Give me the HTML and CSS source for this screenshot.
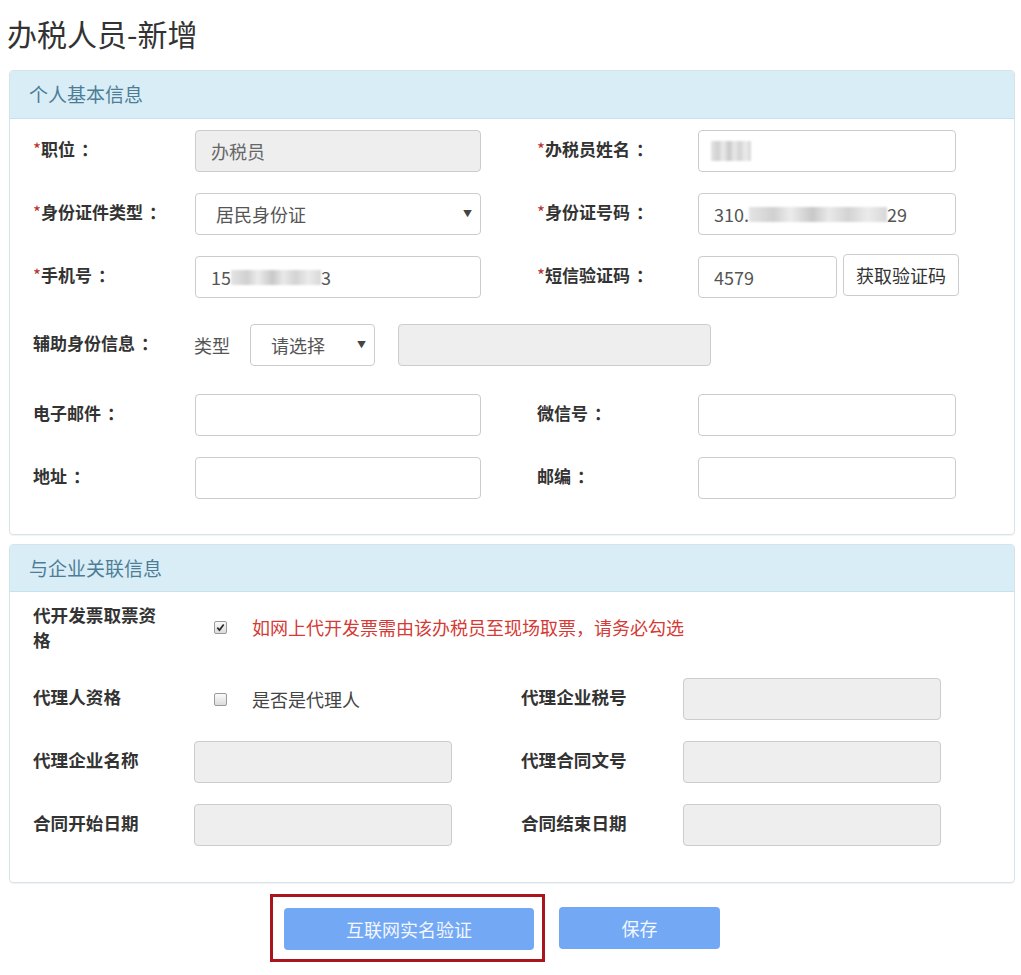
FILE: index.html
```html
<!DOCTYPE html>
<html>
<head>
	<title>办税人员-新增</title>
	<meta name="viewport" content="width=device-width">
	<link rel="stylesheet" href="styles.css">
</head>
<body>
	<div class="page">
		<h1 class="page-title">办税人员-新增</h1>

		<!-- 个人基本信息 -->
		<div class="panel">
			<div class="panel-heading">个人基本信息</div>
			<div class="panel-body basic-body">
				<div class="form-row">
					<label class="field-label"><span class="req">*</span>职位<span class="colon">：</span></label>
					<input class="form-input" type="text" value="办税员" disabled>
					<span></span>
					<label class="field-label"><span class="req">*</span>办税员姓名<span class="colon">：</span></label>
					<div class="form-input fake-input"><span class="mosaic name-mosaic"></span></div>
				</div>

				<div class="form-row">
					<label class="field-label"><span class="req">*</span>身份证件类型<span class="colon">：</span></label>
					<div class="select-wrap">
						<select class="form-select">
							<option selected>居民身份证</option>
						</select>
					</div>
					<span></span>
					<label class="field-label"><span class="req">*</span>身份证号码<span class="colon">：</span></label>
					<div class="form-input fake-input">310.<span class="mosaic id-mosaic"></span>29</div>
				</div>

				<div class="form-row">
					<label class="field-label"><span class="req">*</span>手机号<span class="colon">：</span></label>
					<div class="form-input fake-input">15<span class="mosaic phone-mosaic"></span>3</div>
					<span></span>
					<label class="field-label"><span class="req">*</span>短信验证码<span class="colon">：</span></label>
					<div class="sms-group">
						<input class="form-input sms-input" type="text" value="4579">
						<button class="btn-code">获取验证码</button>
					</div>
				</div>

				<div class="form-row row-extra">
					<label class="field-label">辅助身份信息<span class="colon">：</span></label>
					<div class="extra-group">
						<span class="type-text">类型</span>
						<div class="select-wrap small-select">
							<select class="form-select">
								<option selected>请选择</option>
							</select>
						</div>
						<input class="form-input extra-input" type="text" disabled>
					</div>
				</div>

				<div class="form-row row-mail">
					<label class="field-label">电子邮件<span class="colon">：</span></label>
					<input class="form-input" type="text">
					<span></span>
					<label class="field-label">微信号<span class="colon">：</span></label>
					<input class="form-input" type="text">
				</div>

				<div class="form-row">
					<label class="field-label">地址<span class="colon">：</span></label>
					<input class="form-input" type="text">
					<span></span>
					<label class="field-label">邮编<span class="colon">：</span></label>
					<input class="form-input" type="text">
				</div>
			</div>
		</div>

		<!-- 与企业关联信息 -->
		<div class="panel panel-company">
			<div class="panel-heading">与企业关联信息</div>
			<div class="panel-body company-body">
				<div class="form-row company-row first-row">
					<label class="field-label wrap-label">代开发票取票资格</label>
					<div class="check-line check-wide">
						<span class="check-box">
							<svg width="9" height="9" viewBox="0 0 9 9"><path d="M1.3 4.6 L3.5 7.1 L7.7 1.5" fill="none" stroke="#2b2b2b" stroke-width="1.7"/></svg>
						</span>
						<span class="warn-text">如网上代开发票需由该办税员至现场取票，请务必勾选</span>
					</div>
				</div>

				<div class="form-row company-row">
					<label class="field-label">代理人资格</label>
					<div class="check-line">
						<span class="check-box"></span>
						<span class="check-text">是否是代理人</span>
					</div>
					<span></span>
					<label class="field-label">代理企业税号</label>
					<input class="form-input" type="text" disabled>
				</div>

				<div class="form-row company-row">
					<label class="field-label">代理企业名称</label>
					<input class="form-input" type="text" disabled>
					<span></span>
					<label class="field-label">代理合同文号</label>
					<input class="form-input" type="text" disabled>
				</div>

				<div class="form-row company-row">
					<label class="field-label">合同开始日期</label>
					<input class="form-input" type="text" disabled>
					<span></span>
					<label class="field-label">合同结束日期</label>
					<input class="form-input" type="text" disabled>
				</div>
			</div>
		</div>

		<div class="actions">
			<div class="highlight-box">
				<button class="btn-primary btn-verify">互联网实名验证</button>
			</div>
			<button class="btn-primary btn-save">保存</button>
		</div>
	</div>
</body>
</html>
```

FILE: styles.css
```css
/* базовые стили */
body {
	margin: 0;
	padding: 0;
	background-color: #fff;
	color: #333;
	font-family: "Noto Sans CJK SC", "Liberation Sans", sans-serif;
	font-size: 18px;
}

.page {
	padding: 0 6px 0 9px;
}

.page-title {
	margin: 0 0 0 -2px;
	padding-top: 13px;
	font-size: 30px;
	font-weight: normal;
	line-height: 40px;
	color: #333;
}

/* панели */
.panel {
	margin-top: 17px;
	border: 1px solid #d6e4ea;
	border-radius: 4px;
	box-shadow: 0 1px 1px rgba(0, 0, 0, 0.05);
}

.panel-company {
	margin-top: 9px;
}

.panel-heading {
	height: 47px;
	line-height: 46px;
	padding-left: 19px;
	background-color: #d9edf7;
	border-bottom: 1px solid #c6e2ee;
	border-radius: 3px 3px 0 0;
	color: #4d7d96;
	font-size: 19px;
}

.panel-company .panel-heading {
	height: 46px;
	line-height: 45px;
}

.panel-body {
	padding-left: 23px;
}

.basic-body {
	padding-top: 11px;
	padding-bottom: 35px;
}

.company-body {
	padding-top: 10px;
	padding-bottom: 36px;
}

/* строки формы */
.form-row {
	display: grid;
	grid-template-columns: 162px 286px 56px 161px 258px;
	height: 42px;
	align-items: center;
	margin-top: 21px;
}

.form-row:first-child {
	margin-top: 0;
}

.row-extra {
	margin-top: 26px;
}

.row-mail {
	margin-top: 28px;
}

.company-row {
	grid-template-columns: 161px 258px 69px 162px 258px;
}

.first-row {
	height: 50px;
}

.company-row.first-row + .company-row {
	margin-top: 26px;
}

.field-label {
	margin-bottom: 5px;
	font-weight: bold;
	font-size: 17px;
	color: #333;
	white-space: nowrap;
}

.colon {
	margin-left: 6px;
}

.company-row .field-label {
	font-size: 17.6px;
	margin-bottom: 5px;
}

.company-row .wrap-label {
	white-space: normal;
	width: 126px;
	line-height: 25px;
	margin-bottom: 0;
}

.req {
	color: #b8312f;
	font-weight: normal;
}

.form-input {
	box-sizing: border-box;
	height: 42px;
	width: 100%;
	padding: 0 15px;
	border: 1px solid #ccc;
	border-radius: 4px;
	background-color: #fff;
	font-family: inherit;
	font-size: 18px;
	color: #555;
	outline: none;
}

.form-input:disabled {
	background-color: #eee;
	color: #666;
}

.fake-input {
	display: flex;
	align-items: center;
}

/* размытые данные */
.mosaic {
	display: inline-block;
	height: 15px;
	filter: blur(1px);
	background: linear-gradient(90deg, #e4e4e4 0%, #d0d0d0 18%, #ececec 30%, #c8c8c8 46%, #e9e9e9 58%, #d3d3d3 72%, #ebebeb 86%, #d8d8d8 100%);
}

.name-mosaic {
	width: 40px;
	height: 20px;
	margin-left: -3px;
}

.id-mosaic {
	width: 138px;
}

.phone-mosaic {
	width: 90px;
}

/* селекты */
.select-wrap {
	position: relative;
}

.select-wrap::after {
	content: "▼";
	position: absolute;
	right: 9px;
	top: 14px;
	font-size: 9px;
	color: #444;
	pointer-events: none;
}

.form-select {
	-webkit-appearance: none;
	appearance: none;
	box-sizing: border-box;
	width: 100%;
	height: 42px;
	padding: 0 20px;
	border: 1px solid #ccc;
	border-radius: 4px;
	background-color: #fff;
	font-family: inherit;
	font-size: 18px;
	color: #555;
	outline: none;
}

.sms-group {
	display: flex;
	gap: 6px;
	width: 261px;
}

.sms-input {
	width: 139px;
}

.btn-code {
	box-sizing: border-box;
	width: 116px;
	height: 42px;
	margin-top: -2px;
	border: 1px solid #ccc;
	border-radius: 4px;
	background-color: #fff;
	font-family: inherit;
	font-size: 18px;
	color: #333;
}

.extra-group {
	grid-column: 2 / 6;
	display: flex;
	align-items: center;
	margin-left: -1px;
}

.type-text {
	width: 56px;
	color: #555;
}

.small-select {
	width: 125px;
}

.extra-input {
	width: 313px;
	margin-left: 23px;
}

/* чекбоксы */
.check-line {
	display: flex;
	align-items: center;
}

.check-wide {
	grid-column: 2 / 6;
}

.check-box {
	box-sizing: border-box;
	display: inline-flex;
	align-items: center;
	justify-content: center;
	width: 13px;
	height: 13px;
	margin-left: 20px;
	border: 1px solid #9a9a9a;
	border-radius: 2px;
	background: linear-gradient(#fafafa, #dcdcdc);
}

.warn-text {
	margin-left: 25px;
	color: #d43a36;
}

.check-text {
	margin-left: 25px;
	color: #444;
}

/* кнопки */
.actions {
	display: flex;
	align-items: center;
	margin-top: 11px;
	padding-left: 261px;
}

.highlight-box {
	padding: 11px 8px 9px 11px;
	border: 3px solid #a8151c;
}

.btn-primary {
	height: 42px;
	border: none;
	border-radius: 4px;
	background-color: #72a8f4;
	color: #f3f7ff;
	font-family: inherit;
	font-size: 18px;
}

.btn-verify {
	width: 250px;
}

.btn-save {
	width: 161px;
	margin-left: 14px;
}
```
